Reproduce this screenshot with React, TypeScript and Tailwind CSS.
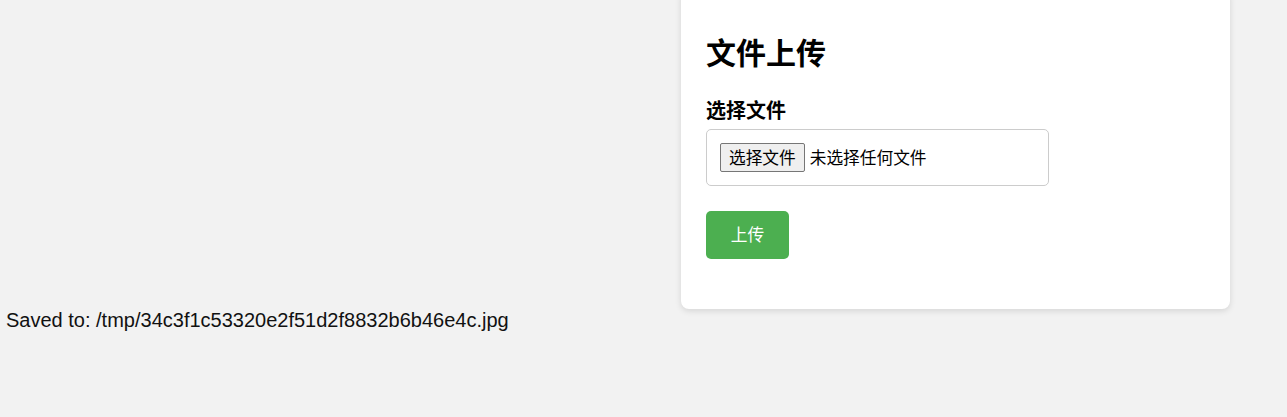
import React from "react";

export default function App() {
  return (
    <div className="min-h-screen w-full overflow-hidden bg-[#f2f2f2] font-['Noto_Sans_CJK_SC',sans-serif]">
      <div className="flex">
        <div className="ml-[681px] mt-[-12px] w-[549px] rounded-[8px] bg-white px-[25px] pt-[45px] pb-[50px] shadow-[0_2px_6px_rgba(0,0,0,0.12)]">
          <h2 className="text-[30px] font-bold leading-[36px] text-black">文件上传</h2>
          <div className="mt-[28px]">
            <label className="block text-[20px] font-bold leading-[26px] text-black">选择文件</label>
            <div className="mt-[6px] flex h-[57px] w-[343px] items-center gap-[5px] rounded-[5px] border border-[#cccccc] px-[13px]">
              <span className="flex h-[29px] items-center rounded-[2px] border border-[#767676] bg-[#efefef] px-[8px] text-[16.7px] text-black">选择文件</span>
              <span className="text-[16.7px] text-black">未选择任何文件</span>
            </div>
          </div>
          <button className="mt-[25px] flex h-[48px] w-[83px] items-center justify-center rounded-[5px] bg-[#4caf50] text-[16.7px] text-white">上传</button>
        </div>
      </div>
      <div className="pl-[6px] font-['Liberation_Sans',Arial,sans-serif] text-[20px] leading-[23px] text-[#111]">
        Saved to: /tmp/34c3f1c53320e2f51d2f8832b6b46e4c.jpg
      </div>
    </div>
  );
}
